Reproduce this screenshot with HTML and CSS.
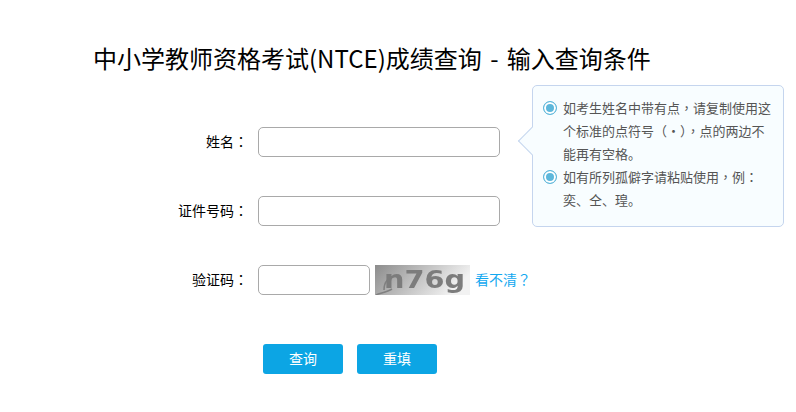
FILE: index.html
```html
<!DOCTYPE html>
<html lang="zh-CN">

<head>
  <meta charset="UTF-8">
  <title>中小学教师资格考试(NTCE)成绩查询</title>
  <link rel="stylesheet" href="styles.css">
</head>

<body>
  <div class="container">
    <h1 class="title">中小学教师资格考试(NTCE)成绩查询 - 输入查询条件</h1>
    <form class="query-form">
      <div class="form-row">
        <label class="form-label">姓名<span class="punct" lang="zh-TW">：</span></label>
        <input type="text" class="form-control">
      </div>
      <div class="form-row">
        <label class="form-label">证件号码<span class="punct" lang="zh-TW">：</span></label>
        <input type="text" class="form-control">
      </div>
      <div class="form-row">
        <label class="form-label">验证码<span class="punct" lang="zh-TW">：</span></label>
        <input type="text" class="form-control code-input">
        <svg class="captcha" width="95" height="30" viewBox="0 0 95 30">
          <defs>
            <linearGradient id="captchaBg" x1="0" y1="0" x2="1" y2="0.3">
              <stop offset="0" stop-color="#8c8c8c"/>
              <stop offset="1" stop-color="#f2f2f2"/>
            </linearGradient>
          </defs>
          <rect width="95" height="30" fill="url(#captchaBg)"/>
          <g class="captcha-ink">
            <path d="M1 30 C6 28 12 27 17 24 M9 25 C9 17 13 12 22 11" fill="none" stroke="#808080" stroke-width="1.6"/>
            <text x="9" y="23" class="captcha-text" textLength="81" lengthAdjust="spacingAndGlyphs">n76g</text>
          </g>
        </svg>
        <a class="refresh-link">看不清<span class="punct" lang="zh-TW">？</span></a>
      </div>
      <div class="btn-row">
        <button type="button" class="btn-primary">查询</button>
        <button type="button" class="btn-primary">重填</button>
      </div>
    </form>

    <div class="tip">
      <span class="tip-arrow"></span>
      <div class="tip-item">
        <span class="tip-dot"></span>
        <p>如考生姓名中带有点<span class="punct" lang="zh-TW">，</span>请复制使用这个标准的点符号（·）<span class="punct" lang="zh-TW">，</span>点的两边不能再有空格。</p>
      </div>
      <div class="tip-item">
        <span class="tip-dot"></span>
        <p>如有所列孤僻字请粘贴使用<span class="punct" lang="zh-TW">，</span>例<span class="punct" lang="zh-TW">：</span><br>奕、仝、瑝。</p>
      </div>
    </div>
  </div>
</body>

</html>
```

FILE: styles.css
```css
body {
  margin: 0;
  padding: 0;
  background-color: #fff;
  font-family: "Noto Sans CJK SC", "Liberation Sans", sans-serif;
}

.container {
  position: relative;
  width: 796px;
  height: 412px;
  overflow: hidden;
}

.punct {
  font-family: "Noto Sans CJK TC", sans-serif;
}

.title {
  margin: 0;
  padding: 40px 0 0 93px;
  font-size: 24px;
  font-weight: normal;
  line-height: 36px;
  word-spacing: 3px;
  color: #000;
}

.query-form {
  padding-top: 51px;
}

.form-row {
  display: flex;
  align-items: center;
  height: 30px;
  margin-bottom: 39px;
}

.form-label {
  width: 248px;
  margin-right: 10px;
  padding-bottom: 2px;
  font-size: 14px;
  text-align: right;
  color: #000;
}

.form-control {
  box-sizing: border-box;
  width: 242px;
  height: 30px;
  padding: 0 8px;
  border: 1px solid #a9a9a9;
  border-radius: 5px;
  background-color: #fff;
}

.code-input {
  width: 112px;
}

.captcha {
  display: block;
  margin-left: 5px;
}

.captcha-ink {
  filter: blur(0.6px);
}

.captcha-text {
  font-family: "DejaVu Sans", sans-serif;
  font-size: 24px;
  font-weight: bold;
  fill: #7c7c7c;
}

.refresh-link {
  margin-left: 5px;
  padding-bottom: 2px;
  font-size: 14px;
  color: #12a8f0;
}

.btn-row {
  display: flex;
  gap: 14px;
  padding-left: 263px;
  margin-top: 49px;
}

.btn-primary {
  width: 80px;
  height: 30px;
  padding: 0 0 2px;
  border: none;
  border-radius: 3px;
  background-color: #0ca5e4;
  color: #fff;
  font-family: inherit;
  font-size: 14px;
}

.tip {
  position: absolute;
  left: 532px;
  top: 85px;
  box-sizing: border-box;
  width: 252px;
  height: 142px;
  padding: 10px 10px 0 10px;
  border: 1px solid #c5d5ee;
  border-radius: 5px;
  background-color: #f8fdff;
}

.tip-arrow {
  position: absolute;
  left: -11px;
  top: 45px;
  box-sizing: border-box;
  width: 20px;
  height: 20px;
  border-left: 1px solid #c5d5ee;
  border-bottom: 1px solid #c5d5ee;
  background-color: #f8fdff;
  transform: rotate(45deg);
}

.tip-item {
  position: relative;
  display: flex;
}

.tip-dot {
  flex: none;
  box-sizing: border-box;
  width: 14px;
  height: 14px;
  margin-top: 5px;
  margin-right: 6px;
  border: 1px solid #5db7db;
  border-radius: 50%;
  background-color: #5db7db;
  box-shadow: inset 0 0 0 2px #fff;
}

.tip-item p {
  margin: 0;
  font-size: 13px;
  line-height: 23px;
  color: #555;
}
```
